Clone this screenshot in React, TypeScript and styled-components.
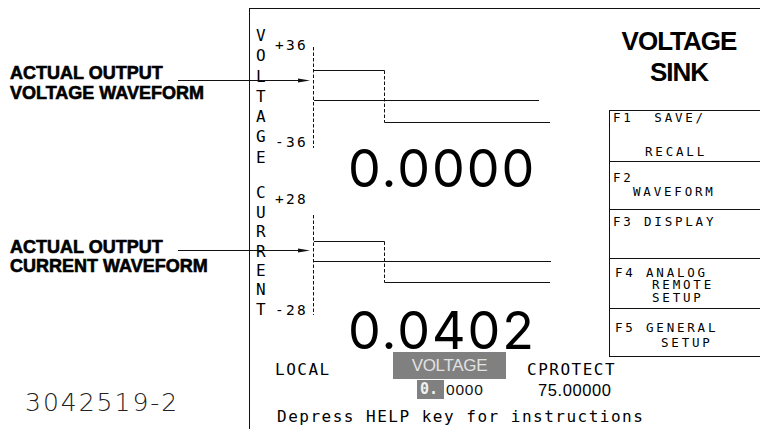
import { FC } from "react";
import styled, { createGlobalStyle } from "styled-components";

const GlobalStyle = createGlobalStyle`
  html, body {
    margin: 0;
    padding: 0;
    background: #fff;
  }
  body {
    font-family: "DejaVu Sans Mono", "Liberation Mono", monospace;
    color: #000;
  }
`;

const Page = styled.div`
  width: 760px;
  height: 429px;
  overflow: hidden;
  display: grid;
  grid-template-columns: 249px 1fr;
  background: #fff;
`;

// Left side: callouts and drawing number
const Notes = styled.aside`
  position: relative;
  z-index: 1;
  display: flex;
  flex-direction: column;
  padding-left: 10px;
`;

const Callout = styled.div<{ $top: number }>`
  width: 300px;
  margin-top: ${({ $top }) => $top}px;
  font: bold 18px/19px "Liberation Sans", Arial, sans-serif;
  -webkit-text-stroke: 0.6px #000;
  white-space: nowrap;
`;

const CalloutHead = styled.div`
  display: flex;
  align-items: flex-start;
`;

const Leader = styled.svg<{ $drop: number }>`
  flex: none;
  margin-left: auto;
  margin-top: ${({ $drop }) => $drop}px;
  overflow: visible;
`;

const PartNumber = styled.div`
  margin-top: auto;
  padding: 0 0 14px 15px;
  font: 200 25px/25px "DejaVu Sans", sans-serif;
  letter-spacing: 2px;
  color: #222;
`;

// Instrument screen
const Panel = styled.main`
  margin-top: 8px;
  border-top: 1px solid #111;
  border-left: 1px solid #111;
  display: grid;
  grid-template-columns: 359px 1fr;
  min-height: 0;
`;

const Readout = styled.section`
  display: flex;
  flex-direction: column;
  padding: 17px 0 0 6px;
`;

const Channel = styled.div<{ $chart: number; $gap: number }>`
  display: grid;
  grid-template-columns: 19px 38px 1fr;
  grid-template-rows: ${({ $chart }) => $chart}px 26px;
  margin-top: ${({ $gap }) => $gap}px;
`;

const AxisName = styled.div<{ $pitch: number }>`
  grid-row: 1 / span 2;
  display: flex;
  flex-direction: column;
  font-size: 16px;
  line-height: ${({ $pitch }) => $pitch}px;
`;

const Scale = styled.div<{ $padTop: number; $padBottom: number }>`
  display: flex;
  flex-direction: column;
  justify-content: space-between;
  padding: ${({ $padTop, $padBottom }) => `${$padTop}px 0 ${$padBottom}px`};
  font-size: 14.5px;
  line-height: 16px;
  letter-spacing: 2.3px;
`;

const Trace = styled.svg<{ $top: number }>`
  display: block;
  margin-top: ${({ $top }) => $top}px;
  overflow: visible;
  stroke: #111;
  stroke-width: 1;
  fill: none;
`;

const Reading = styled.div`
  grid-column: 2 / span 2;
  padding-left: 73px;
  font: 400 52px/26px Inter, "DejaVu Sans", sans-serif;
  letter-spacing: 2px;
  white-space: nowrap;
`;

const Status = styled.div`
  display: grid;
  grid-template-columns: 118px 134px auto;
  grid-template-rows: 28px 20px auto;
  margin: 7.6px 0 0 19px;
  white-space: nowrap;
`;

const StatusWord = styled.div`
  align-self: end;
  font-size: 16px;
  line-height: 20px;
  letter-spacing: 1.5px;
`;

const ModeTag = styled.div`
  width: 113px;
  height: 27px;
  background: #808080;
  color: #e2e2e2;
  font: 17px/27px "Liberation Sans", Arial, sans-serif;
  letter-spacing: -0.3px;
  text-align: center;
`;

const Setpoint = styled.div`
  display: flex;
  align-items: flex-start;
  padding-left: 24px;
`;

const Cursor = styled.span`
  width: 27px;
  height: 19px;
  box-sizing: border-box;
  padding-left: 3px;
  background: #808080;
  color: #f0f0f0;
  font-size: 15px;
  font-weight: bold;
  line-height: 19px;
`;

const Digits = styled.span`
  margin-left: 2px;
  font: 15.5px/20px "Liberation Sans", Arial, sans-serif;
  letter-spacing: 0.8px;
  color: #111;
`;

const Limit = styled.div`
  padding-left: 11px;
  font: 16.5px/20px "Liberation Sans", Arial, sans-serif;
  letter-spacing: 0.6px;
`;

const Hint = styled.div`
  grid-column: 1 / -1;
  padding: 7px 0 0 2px;
  font-size: 16px;
  line-height: 20px;
  letter-spacing: 1.5px;
`;

const Side = styled.aside`
  display: flex;
  flex-direction: column;
`;

const Title = styled.h1`
  margin: 17px 11px 0 0;
  font: bold 26px/31px "Liberation Sans", Arial, sans-serif;
  letter-spacing: -1px;
  text-align: center;
`;

const Keys = styled.div`
  margin-top: 22px;
  border-left: 1px solid #111;
  border-bottom: 1px solid #111;
`;

const Key = styled.div<{ $h: number; $pad: number; $pitch?: number }>`
  box-sizing: border-box;
  height: ${({ $h }) => $h}px;
  padding: ${({ $pad }) => $pad}px 0 0 3px;
  border-top: 1px solid #111;
  font-size: 12.5px;
  line-height: ${({ $pitch = 12 }) => $pitch}px;
  letter-spacing: 2.8px;
  white-space: pre;
`;

const KeyLine = styled.div<{ $indent?: number; $gap?: number }>`
  padding-left: ${({ $indent = 0 }) => $indent}px;
  margin-top: ${({ $gap = 0 }) => $gap}px;
`;

interface ILeaderProps {
  drop: number;
}

const Arrow: FC<ILeaderProps> = ({ drop }) => (
  <Leader $drop={drop} width={132} height={7} viewBox="0 0 132 7">
    <line x1={0} y1={3.5} x2={122} y2={3.5} stroke="#111" strokeWidth={1.2} />
    <polygon points="120,1.6 132,3.5 120,5.4" fill="#111" />
  </Leader>
);

interface IWaveformProps {
  top: number;
  height: number;
  high: number;
  mid: number;
  low: number;
  midEnd: number;
  lowEnd: number;
}

const Waveform: FC<IWaveformProps> = ({ top, height, high, mid, low, midEnd, lowEnd }) => (
  <Trace $top={top} width={245} height={height}>
    <line x1={0.5} y1={0} x2={0.5} y2={height} strokeDasharray="3.5 2" />
    <line x1={1} y1={high} x2={71.5} y2={high} />
    <line x1={71.5} y1={high} x2={71.5} y2={low} strokeDasharray="3.5 2" />
    <line x1={71.5} y1={low} x2={lowEnd} y2={low} />
    <line x1={1} y1={mid} x2={midEnd} y2={mid} />
  </Trace>
);

interface IChannelProps {
  name: string;
  pitch: number;
  gap: number;
  chart: number;
  max: string;
  min: string;
  padTop: number;
  padBottom: number;
  trace: IWaveformProps;
  value: string;
}

const ChannelView: FC<IChannelProps> = ({
  name,
  pitch,
  gap,
  chart,
  max,
  min,
  padTop,
  padBottom,
  trace,
  value,
}) => (
  <Channel $chart={chart} $gap={gap}>
    <AxisName $pitch={pitch}>
      {name.split("").map((ch, i) => (
        <span key={i}>{ch}</span>
      ))}
    </AxisName>
    <Scale $padTop={padTop} $padBottom={padBottom}>
      <span>{max}</span>
      <span>{min}</span>
    </Scale>
    <div>
      <Waveform {...trace} />
    </div>
    <Reading>{value}</Reading>
  </Channel>
);

const channels: IChannelProps[] = [
  {
    name: "VOLTAGE",
    pitch: 20.3,
    gap: 0,
    chart: 130,
    max: "+36",
    min: "-36",
    padTop: 10.6,
    padBottom: 6.3,
    trace: { top: 21, height: 101, high: 23.5, mid: 53.5, low: 75.5, midEnd: 226, lowEnd: 237 },
    value: "0.0000",
  },
  {
    name: "CURRENT",
    pitch: 19.4,
    gap: 1.4,
    chart: 135,
    max: "+28",
    min: "-28",
    padTop: 7.2,
    padBottom: 0.5,
    trace: { top: 31.6, height: 100, high: 26.5, mid: 46.5, low: 67.5, midEnd: 238, lowEnd: 237 },
    value: "0.0402",
  },
];

const App: FC = () => (
  <>
    <GlobalStyle />
    <Page>
      <Notes>
        <Callout $top={64}>
          <CalloutHead>
            ACTUAL OUTPUT
            <Arrow drop={12.5} />
          </CalloutHead>
          <div>VOLTAGE WAVEFORM</div>
        </Callout>
        <Callout $top={135}>
          <CalloutHead>
            ACTUAL OUTPUT
            <Arrow drop={9.5} />
          </CalloutHead>
          <div>CURRENT WAVEFORM</div>
        </Callout>
        <PartNumber>3042519-2</PartNumber>
      </Notes>

      <Panel>
        <Readout>
          {channels.map((c) => (
            <ChannelView key={c.name} {...c} />
          ))}
          <Status>
            <StatusWord>LOCAL</StatusWord>
            <ModeTag>VOLTAGE</ModeTag>
            <StatusWord>CPROTECT</StatusWord>
            <div />
            <Setpoint>
              <Cursor>0.</Cursor>
              <Digits>0000</Digits>
            </Setpoint>
            <Limit>75.00000</Limit>
            <Hint>Depress HELP key for instructions</Hint>
          </Status>
        </Readout>

        <Side>
          <Title>
            VOLTAGE
            <br />
            SINK
          </Title>
          <Keys>
            <Key $h={51} $pad={1}>
              <KeyLine>F1  SAVE/</KeyLine>
              <KeyLine $indent={32} $gap={22}>
                RECALL
              </KeyLine>
            </Key>
            <Key $h={48} $pad={10}>
              <KeyLine>F2</KeyLine>
              <KeyLine $indent={20} $gap={2}>
                WAVEFORM
              </KeyLine>
            </Key>
            <Key $h={49} $pad={6}>
              <KeyLine>F3 DISPLAY</KeyLine>
            </Key>
            <Key $h={50} $pad={7.5} $pitch={12.5}>
              <KeyLine $indent={2}>F4 ANALOG</KeyLine>
              <KeyLine $indent={39}>REMOTE</KeyLine>
              <KeyLine $indent={39}>SETUP</KeyLine>
            </Key>
            <Key $h={48} $pad={13}>
              <KeyLine $indent={2}>F5 GENERAL</KeyLine>
              <KeyLine $indent={48} $gap={3}>
                SETUP
              </KeyLine>
            </Key>
          </Keys>
        </Side>
      </Panel>
    </Page>
  </>
);

export default App;
